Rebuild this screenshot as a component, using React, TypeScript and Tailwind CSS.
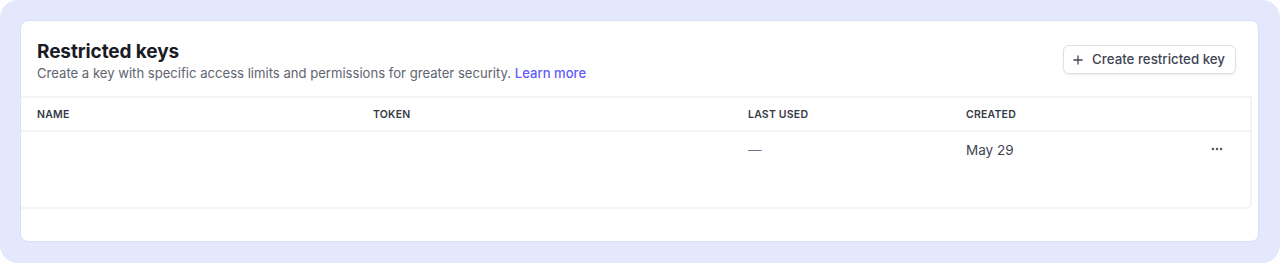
import { Plus, MoreHorizontal } from "lucide-react"

const columns = [
  { label: "Name", w: "w-[336px]" },
  { label: "Token", w: "w-[375px]" },
  { label: "Last used", w: "w-[218px]" },
  { label: "Created", w: "flex-1" },
]

export default function App() {
  return (
    <div className="h-[263px] w-full bg-white font-['Inter',sans-serif]">
      <div className="h-full rounded-[18px] bg-[#e3e8fc] pl-[20px] pr-[21px] pt-[20px] pb-[21px]">
        <div className="flex h-full flex-col overflow-hidden rounded-[8px] border border-[#d9e0fa] bg-white">
          {/* Header */}
          <div className="flex items-start justify-between pl-[16px] pr-[22px] pt-[18px] h-[75px]">
            <div>
              <h1 className="text-[19px] font-bold leading-[26px] text-[#1a1b25] tracking-[-0.1px]">Restricted keys</h1>
              <p className="-mt-[1px] text-[13.1px] leading-[18px] text-[#60646f]">
                Create a key with specific access limits and permissions for greater security.{" "}
                <span className="font-medium text-[#635bff]">Learn more</span>
              </p>
            </div>
            <button className="mt-[6px] flex h-[29px] items-center gap-[7px] rounded-[6px] border border-[#dfe1e7] bg-white pl-[7px] pr-[10px] text-[13.3px] font-medium text-[#414552] shadow-[0_1px_2px_rgba(0,0,0,0.08)]">
              <Plus className="h-[14px] w-[14px]" strokeWidth={2.2} />
              Create restricted key
            </button>
          </div>

          {/* Table */}
          <div className="mr-[6px] rounded-br-[6px] border-t-2 border-r-2 border-b-2 border-[#f3f3f5]">
            <div className="flex h-[34px] items-center border-b-2 border-[#f3f3f5] pl-[16px] pt-[2px] text-[10.5px] font-semibold uppercase tracking-[0.2px] text-[#353a44]">
              {columns.map((c) => (
                <div key={c.label} className={c.w}>{c.label}</div>
              ))}
            </div>
            <div className="flex h-[75px] items-start pl-[16px] pt-[8px] text-[13.5px] text-[#414552]">
              <div className="w-[336px]" />
              <div className="w-[375px]" />
              <div className="w-[218px] text-[#6c7080]">—</div>
              <div className="flex-1">May 29</div>
              <div className="pr-[26px] pt-[2px]">
                <MoreHorizontal className="h-[14px] w-[14px] text-[#545969]" strokeWidth={2.4} />
              </div>
            </div>
          </div>
        </div>
      </div>
    </div>
  )
}
